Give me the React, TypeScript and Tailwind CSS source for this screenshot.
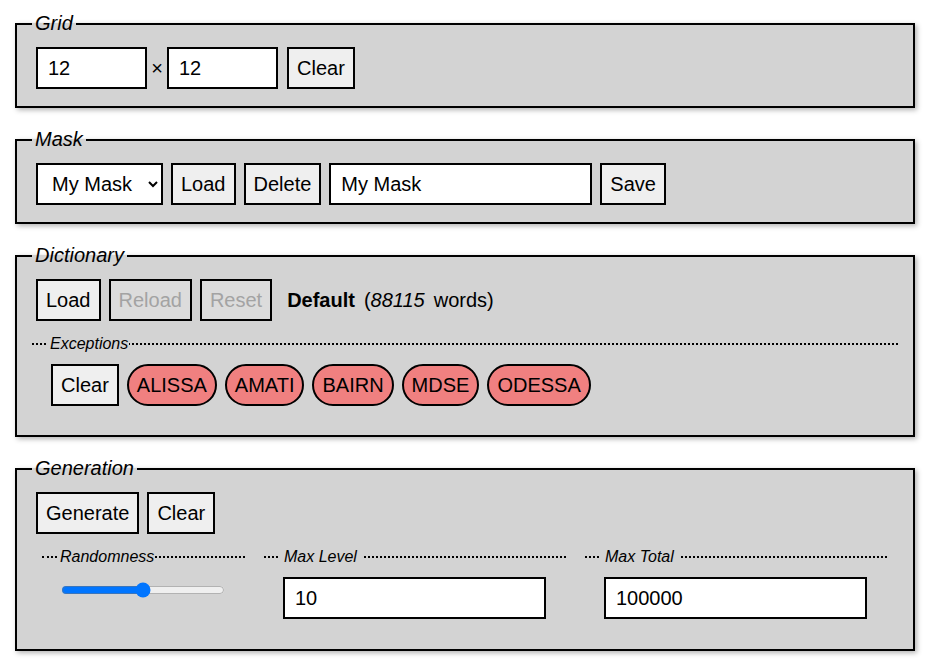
import { useState } from "react";

const base = "h-[42px] px-[8px] border-2 border-black text-[20px] leading-[23px] shrink-0";
const btn = `${base} bg-[#efefef] text-black`;
const btnOff = `${base} bg-[#dcdcdc] text-[#a3a3a3]`;
const txt =
  "h-[42px] px-[10px] border-2 border-black bg-white text-[20px] leading-[23px] text-black outline-none shrink-0";
const pill = `${base} bg-[#f08080] rounded-full text-black`;

const Box = ({ title, children }: { title: string; children: React.ReactNode }) => (
  <fieldset className="w-[900px] ml-[15px] mb-[20px] border-2 border-black bg-[#d3d3d3] px-[15px] pt-[12px] pb-[17px] shadow-[2px_2px_5px_rgba(0,0,0,0.3)]">
    <legend className="px-[3px] text-[20px] leading-[23px] italic text-black">{title}</legend>
    {children}
  </fieldset>
);

const Sub = ({
  title,
  className,
  legendPad,
  children,
}: {
  title: string;
  className: string;
  legendPad: string;
  children: React.ReactNode;
}) => (
  <fieldset className={`border-0 border-t-2 border-dotted border-black px-[15px] pt-[11px] ${className}`}>
    <legend className={`${legendPad} text-[16px] leading-[18px] italic text-black`}>{title}</legend>
    {children}
  </fieldset>
);

export default function App() {
  const [rows, setRows] = useState("12");
  const [cols, setCols] = useState("12");
  const [maskName, setMaskName] = useState("My Mask");
  const [random, setRandom] = useState(50);
  const [maxLevel, setMaxLevel] = useState("10");
  const [maxTotal, setMaxTotal] = useState("100000");
  const [exceptions, setExceptions] = useState(["ALISSA", "AMATI", "BAIRN", "MDSE", "ODESSA"]);

  return (
    <div className="min-h-screen bg-white pt-[12px] font-['Liberation_Sans',Arial,sans-serif]">
      <Box title="Grid">
        <div className="flex items-center px-[4px]">
          <input className={`${txt} w-[111px]`} value={rows} onChange={(e) => setRows(e.target.value)} />
          <span className="w-[20px] text-center text-[20px] leading-[23px]">×</span>
          <input className={`${txt} w-[111px]`} value={cols} onChange={(e) => setCols(e.target.value)} />
          <button className={`${btn} ml-[9px]`}>Clear</button>
        </div>
      </Box>

      <Box title="Mask">
        <div className="flex items-center gap-[8px] px-[4px]">
          <select className="h-[42px] w-[127px] pl-[10px] pr-[8px] border-2 border-black bg-white text-[20px] text-black shrink-0">
            <option>My Mask</option>
          </select>
          <button className={btn}>Load</button>
          <button className={btn}>Delete</button>
          <input className={`${txt} w-[263px]`} value={maskName} onChange={(e) => setMaskName(e.target.value)} />
          <button className={btn}>Save</button>
        </div>
      </Box>

      <Box title="Dictionary">
        <div className="flex items-center gap-[8px] px-[4px]">
          <button className={btn}>Load</button>
          <button className={btnOff} disabled>
            Reload
          </button>
          <button className={btnOff} disabled>
            Reset
          </button>
          <span className="ml-[7px] text-[20px] leading-[23px] text-black">
            <b>Default</b>
            <span className="ml-[9px]">(</span>
            <i>88115</i>
            <span className="ml-[9px]">words)</span>
          </span>
        </div>
        <Sub title="Exceptions" className="mt-[14px] pb-[12px]" legendPad="pl-[3px] pr-[1px]">
          <div className="flex items-center gap-[8px] px-[4px]">
            <button className={btn} onClick={() => setExceptions([])}>
              Clear
            </button>
            {exceptions.map((w) => (
              <button key={w} className={pill}>
                {w}
              </button>
            ))}
          </div>
        </Sub>
      </Box>

      <Box title="Generation">
        <div className="flex items-center gap-[8px] px-[4px]">
          <button className={btn}>Generate</button>
          <button className={btn}>Clear</button>
        </div>
        <div className="flex gap-[19px] pl-[10px] mt-[14px]">
          <Sub title="Randomness" className="w-[203px] shrink-0 pb-[13px]" legendPad="pl-[3px] pr-[1px]">
            <div className="px-[4px]">
              <input
                type="range"
                min={0}
                max={100}
                value={random}
                onChange={(e) => setRandom(Number(e.target.value))}
                className="w-[164px] h-[16px] mt-[5px] mb-[21px] block"
              />
            </div>
          </Sub>
          <Sub title="Max Level" className="w-[302px] shrink-0 pb-[13px]" legendPad="px-[5px]">
            <div className="px-[4px]">
              <input className={`${txt} w-[263px]`} value={maxLevel} onChange={(e) => setMaxLevel(e.target.value)} />
            </div>
          </Sub>
          <Sub title="Max Total" className="w-[302px] shrink-0 pb-[13px]" legendPad="px-[5px]">
            <div className="px-[4px]">
              <input className={`${txt} w-[263px]`} value={maxTotal} onChange={(e) => setMaxTotal(e.target.value)} />
            </div>
          </Sub>
        </div>
      </Box>
    </div>
  );
}
